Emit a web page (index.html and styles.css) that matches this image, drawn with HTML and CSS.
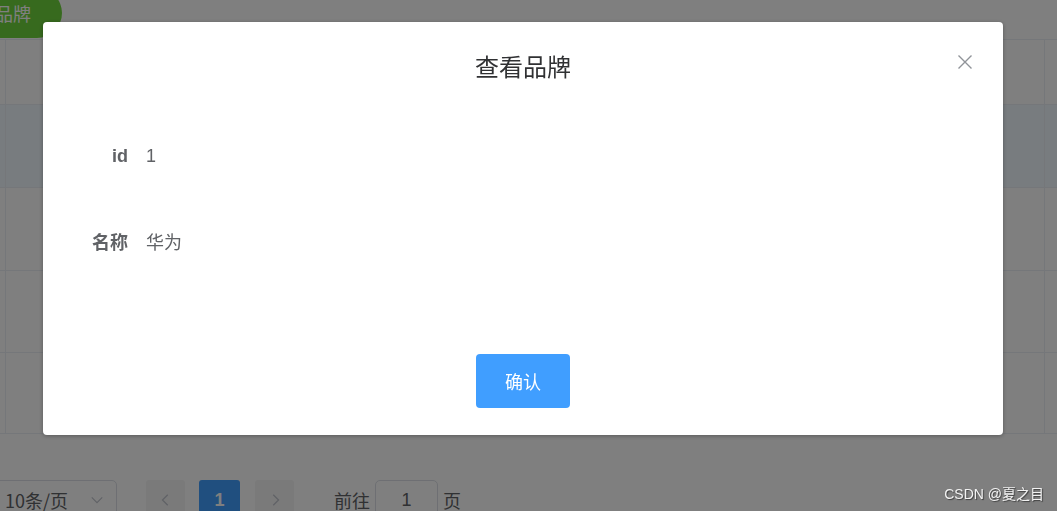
FILE: index.html
```html
<!DOCTYPE html>
<html lang="zh">
<head>
<meta charset="utf-8">
<title>查看品牌</title>
<link rel="stylesheet" href="styles.css">
</head>
<body>
<div class="page">
  <div class="toolbar">
    <button class="btn-add">添加品牌</button>
  </div>
  <div class="table">
    <div class="row head"><div class="cell c0"></div><div class="cell c1"></div><div class="cell c2"></div></div>
    <div class="row r1 hover"><div class="cell c0"></div><div class="cell c1"></div><div class="cell c2"></div></div>
    <div class="row r1"><div class="cell c0"></div><div class="cell c1"></div><div class="cell c2"></div></div>
    <div class="row r2"><div class="cell c0"></div><div class="cell c1"></div><div class="cell c2"></div></div>
    <div class="row r3"><div class="cell c0"></div><div class="cell c1"></div><div class="cell c2"></div></div>
  </div>
  <div class="pager">
    <div class="sizes">10条/页
      <svg class="chev" viewBox="0 0 16 16" width="14" height="14"><path d="M2 5 L8 11 L14 5" fill="none" stroke="#c0c4cc" stroke-width="1.3"/></svg>
    </div>
    <div class="pbtn"><svg viewBox="0 0 16 16" width="14" height="14"><path d="M10 2 L4 8 L10 14" fill="none" stroke="#c0c4cc" stroke-width="1.5"/></svg></div>
    <div class="pnum">1</div>
    <div class="pbtn"><svg viewBox="0 0 16 16" width="14" height="14"><path d="M6 2 L12 8 L6 14" fill="none" stroke="#c0c4cc" stroke-width="1.5"/></svg></div>
    <div class="jump">前往<span class="jinput">1</span>页</div>
  </div>
</div>

<div class="overlay"></div>

<div class="dialog">
  <div class="dlg-head">
    <span class="dlg-title">查看品牌</span>
    <svg class="dlg-close" viewBox="0 0 16 16" width="16" height="16"><path d="M1.5 1.5 L14.5 14.5 M14.5 1.5 L1.5 14.5" stroke="#909399" stroke-width="1.4" fill="none"/></svg>
  </div>
  <div class="dlg-body">
    <div class="item"><label class="lbl">id</label><span class="val">1</span></div>
    <div class="item"><label class="lbl">名称</label><span class="val">华为</span></div>
  </div>
  <div class="dlg-foot">
    <button class="btn-ok">确认</button>
  </div>
</div>

<div class="watermark">CSDN @夏之目</div>
</body>
</html>
```

FILE: styles.css
```css
* { box-sizing: border-box; }
html, body { margin: 0; padding: 0; }
body {
  width: 1057px;
  height: 511px;
  overflow: hidden;
  background: #fff;
  font-family: "Noto Sans CJK SC", "Noto Sans", sans-serif;
  color: #606266;
}
.page { width: 1057px; height: 511px; overflow: hidden; }

.toolbar { height: 39px; }
.btn-add {
  margin: -12px 0 0 -52px;
  height: 50px;
  width: 114px;
  border: none;
  border-radius: 25px;
  background: #6fd43d;
  color: #fff;
  font-family: inherit;
  font-size: 18px;
  padding: 0 0 0 11px;
  text-align: left;
  line-height: 50px;
}

.table { border-top: 1px solid #ebeef5; }
.row { display: grid; grid-template-columns: 6px 1039px 100px; border-bottom: 1px solid #ebeef5; }
.row .cell { border-right: 1px solid #ebeef5; }
.head { height: 65px; }
.r1 { height: 83px; }
.r2 { height: 82px; }
.r3 { height: 81px; }
.hover { background: #f0f8ff; }

.pager {
  margin-top: 46px;
  display: flex;
  align-items: flex-start;
  height: 40px;
  font-size: 18px;
  color: #606266;
}
.sizes {
  margin-left: -30px;
  width: 147px;
  height: 40px;
  border: 1px solid #dcdfe6;
  border-radius: 5px;
  padding-left: 34px;
  line-height: 38px;
  position: relative;
  color: #606266;
}
.chev { position: absolute; right: 12px; top: 12px; }
.pbtn, .pnum {
  width: 39px;
  height: 40px;
  border-radius: 3px;
  background: #f4f4f5;
  display: flex;
  align-items: center;
  justify-content: center;
}
.pbtn:nth-of-type(2) { margin-left: 29px; }
.pnum {
  margin-left: 14px;
  width: 41px;
  background: #409eff;
  color: #fff;
  font-weight: bold;
  font-family: "Liberation Sans", "Noto Sans CJK SC", sans-serif;
}
.pnum + .pbtn { margin-left: 15px; }
.jump { margin-left: 40px; display: flex; align-items: flex-start; line-height: 40px; }
.jinput {
  display: inline-block;
  margin: 0 5px;
  width: 63px;
  height: 40px;
  border: 1px solid #dcdfe6;
  border-radius: 5px;
  text-align: center;
  line-height: 38px;
  color: #606266;
  font-family: "Liberation Sans", sans-serif;
}

.overlay {
  position: fixed;
  inset: 0;
  background: rgba(0, 0, 0, 0.5);
}

.dialog {
  position: fixed;
  left: 43px;
  top: 22px;
  width: 960px;
  height: 413px;
  background: #fff;
  border-radius: 4px;
  box-shadow: 0 1px 4px rgba(0, 0, 0, 0.3);
  display: flex;
  flex-direction: column;
}
.dlg-head {
  position: relative;
  padding-top: 30px;
  text-align: center;
}
.dlg-title {
  font-size: 24px;
  line-height: 28px;
  color: #303133;
  display: block;
}
.dlg-close { position: absolute; right: 30px; top: 32px; }

.dlg-body { padding-top: 51px; }
.item {
  height: 50px;
  display: flex;
  align-items: center;
  margin-bottom: 35px;
  font-size: 18px;
}
.lbl {
  width: 85px;
  text-align: right;
  font-weight: bold;
  color: #606266;
  font-family: "Liberation Sans", "Noto Sans CJK SC", sans-serif;
}
.val {
  margin-left: 18px;
  color: #606266;
  font-family: "Liberation Sans", "Noto Sans CJK SC", sans-serif;
}

.dlg-foot {
  margin-top: auto;
  padding-bottom: 27px;
  display: flex;
  justify-content: center;
}
.btn-ok {
  width: 94px;
  height: 54px;
  border: none;
  border-radius: 4px;
  background: #409eff;
  color: #fff;
  font-size: 18px;
  font-family: "Noto Sans CJK SC", sans-serif;
}

.watermark {
  position: fixed;
  right: 13px;
  bottom: 8px;
  font-size: 14px;
  color: #f2f2f2;
  text-shadow: 1px 1px 1px rgba(0, 0, 0, 0.5);
  font-family: "Liberation Sans", "Noto Sans CJK SC", sans-serif;
}
```
